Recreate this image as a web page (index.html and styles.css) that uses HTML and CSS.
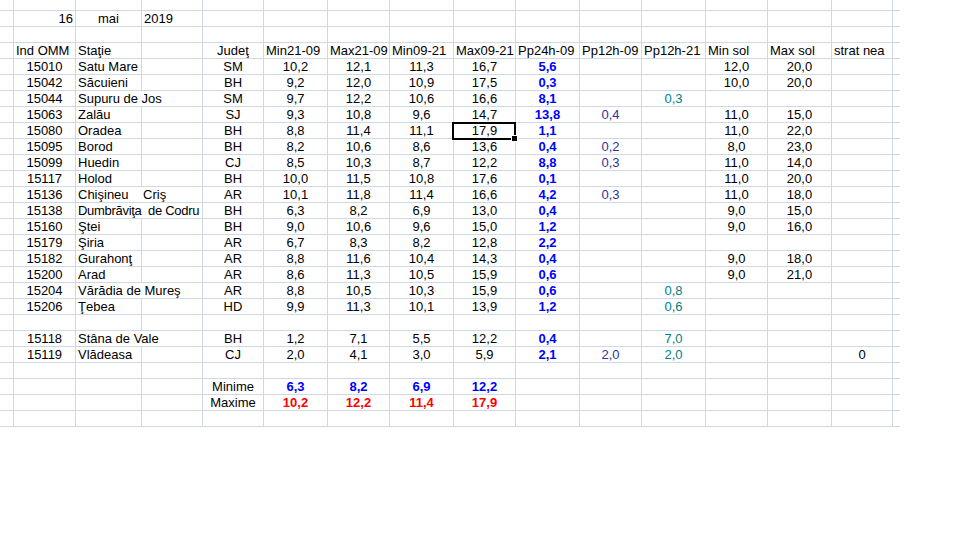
FILE: index.html
```html
<!DOCTYPE html>
<html lang="ro">
<head>
<meta charset="utf-8">
<title>Temperaturi 16 mai 2019</title>
<link rel="stylesheet" href="styles.css">
</head>
<body>
<div class="sheet">
<!-- row 0 -->
<div></div><div></div><div></div><div></div><div></div><div></div><div></div><div></div><div></div><div></div><div></div><div></div><div></div><div></div><div></div><div class="e"></div>
<!-- row 1 -->
<div></div><div class="r">16</div><div>mai</div><div class="t">2019</div><div></div><div></div><div></div><div></div><div></div><div></div><div></div><div></div><div></div><div></div><div></div><div class="e"></div>
<!-- row 2 -->
<div></div><div></div><div></div><div></div><div></div><div></div><div></div><div></div><div></div><div></div><div></div><div></div><div></div><div></div><div></div><div class="e"></div>
<!-- row 3 headers -->
<div></div><div class="t">Ind OMM</div><div class="t">Staţie</div><div></div><div>Judeţ</div><div class="t">Min21-09</div><div class="t">Max21-09</div><div class="t">Min09-21</div><div class="t">Max09-21</div><div class="t">Pp24h-09</div><div class="t">Pp12h-09</div><div class="t">Pp12h-21</div><div class="t">Min sol</div><div class="t">Max sol</div><div class="t">strat nea</div><div class="e"></div>
<!-- data -->
<div></div><div>15010</div><div class="t">Satu Mare</div><div></div><div>SM</div><div>10,2</div><div>12,1</div><div>11,3</div><div>16,7</div><div class="bb">5,6</div><div></div><div></div><div>12,0</div><div>20,0</div><div></div><div class="e"></div>
<div></div><div>15042</div><div class="t">Săcuieni</div><div></div><div>BH</div><div>9,2</div><div>12,0</div><div>10,9</div><div>17,5</div><div class="bb">0,3</div><div></div><div></div><div>10,0</div><div>20,0</div><div></div><div class="e"></div>
<div></div><div>15044</div><div class="t s2">Supuru de Jos</div><div>SM</div><div>9,7</div><div>12,2</div><div>10,6</div><div>16,6</div><div class="bb">8,1</div><div></div><div class="te">0,3</div><div></div><div></div><div></div><div class="e"></div>
<div></div><div>15063</div><div class="t">Zalău</div><div></div><div>SJ</div><div>9,3</div><div>10,8</div><div>9,6</div><div>14,7</div><div class="bb">13,8</div><div class="pu">0,4</div><div></div><div>11,0</div><div>15,0</div><div></div><div class="e"></div>
<div></div><div>15080</div><div class="t">Oradea</div><div></div><div>BH</div><div>8,8</div><div>11,4</div><div>11,1</div><div>17,9</div><div class="bb">1,1</div><div></div><div></div><div>11,0</div><div>22,0</div><div></div><div class="e"></div>
<div></div><div>15095</div><div class="t">Borod</div><div></div><div>BH</div><div>8,2</div><div>10,6</div><div>8,6</div><div>13,6</div><div class="bb">0,4</div><div class="pu">0,2</div><div></div><div>8,0</div><div>23,0</div><div></div><div class="e"></div>
<div></div><div>15099</div><div class="t">Huedin</div><div></div><div>CJ</div><div>8,5</div><div>10,3</div><div>8,7</div><div>12,2</div><div class="bb">8,8</div><div class="pu">0,3</div><div></div><div>11,0</div><div>14,0</div><div></div><div class="e"></div>
<div></div><div>15117</div><div class="t">Holod</div><div></div><div>BH</div><div>10,0</div><div>11,5</div><div>10,8</div><div>17,6</div><div class="bb">0,1</div><div></div><div></div><div>11,0</div><div>20,0</div><div></div><div class="e"></div>
<div></div><div>15136</div><div class="t s2">Chişineu    Criş</div><div>AR</div><div>10,1</div><div>11,8</div><div>11,4</div><div>16,6</div><div class="bb">4,2</div><div class="pu">0,3</div><div></div><div>11,0</div><div>18,0</div><div></div><div class="e"></div>
<div></div><div>15138</div><div class="t s2 tight">Dumbrăviţa  de Codru</div><div>BH</div><div>6,3</div><div>8,2</div><div>6,9</div><div>13,0</div><div class="bb">0,4</div><div></div><div></div><div>9,0</div><div>15,0</div><div></div><div class="e"></div>
<div></div><div>15160</div><div class="t">Ştei</div><div></div><div>BH</div><div>9,0</div><div>10,6</div><div>9,6</div><div>15,0</div><div class="bb">1,2</div><div></div><div></div><div>9,0</div><div>16,0</div><div></div><div class="e"></div>
<div></div><div>15179</div><div class="t">Şiria</div><div></div><div>AR</div><div>6,7</div><div>8,3</div><div>8,2</div><div>12,8</div><div class="bb">2,2</div><div></div><div></div><div></div><div></div><div></div><div class="e"></div>
<div></div><div>15182</div><div class="t">Gurahonţ</div><div></div><div>AR</div><div>8,8</div><div>11,6</div><div>10,4</div><div>14,3</div><div class="bb">0,4</div><div></div><div></div><div>9,0</div><div>18,0</div><div></div><div class="e"></div>
<div></div><div>15200</div><div class="t">Arad</div><div></div><div>AR</div><div>8,6</div><div>11,3</div><div>10,5</div><div>15,9</div><div class="bb">0,6</div><div></div><div></div><div>9,0</div><div>21,0</div><div></div><div class="e"></div>
<div></div><div>15204</div><div class="t s2">Vărădia de Mureş</div><div>AR</div><div>8,8</div><div>10,5</div><div>10,3</div><div>15,9</div><div class="bb">0,6</div><div></div><div class="te">0,8</div><div></div><div></div><div></div><div class="e"></div>
<div></div><div>15206</div><div class="t">Ţebea</div><div></div><div>HD</div><div>9,9</div><div>11,3</div><div>10,1</div><div>13,9</div><div class="bb">1,2</div><div></div><div class="te">0,6</div><div></div><div></div><div></div><div class="e"></div>
<!-- row 20 empty -->
<div></div><div></div><div></div><div></div><div></div><div></div><div></div><div></div><div></div><div></div><div></div><div></div><div></div><div></div><div></div><div class="e"></div>
<div></div><div>15118</div><div class="t s2">Stâna de Vale</div><div>BH</div><div>1,2</div><div>7,1</div><div>5,5</div><div>12,2</div><div class="bb">0,4</div><div></div><div class="te">7,0</div><div></div><div></div><div></div><div class="e"></div>
<div></div><div>15119</div><div class="t">Vlădeasa</div><div></div><div>CJ</div><div>2,0</div><div>4,1</div><div>3,0</div><div>5,9</div><div class="bb">2,1</div><div class="pu">2,0</div><div class="te">2,0</div><div></div><div></div><div>0</div><div class="e"></div>
<!-- row 23 empty -->
<div></div><div></div><div></div><div></div><div></div><div></div><div></div><div></div><div></div><div></div><div></div><div></div><div></div><div></div><div></div><div class="e"></div>
<!-- row 24 minime -->
<div></div><div></div><div></div><div></div><div>Minime</div><div class="bb">6,3</div><div class="bb">8,2</div><div class="bb">6,9</div><div class="bb">12,2</div><div></div><div></div><div></div><div></div><div></div><div></div><div class="e"></div>
<!-- row 25 maxime -->
<div></div><div></div><div></div><div></div><div>Maxime</div><div class="br">10,2</div><div class="br">12,2</div><div class="br">11,4</div><div class="br">17,9</div><div></div><div></div><div></div><div></div><div></div><div></div><div class="e"></div>
<!-- row 26 empty -->
<div></div><div></div><div></div><div></div><div></div><div></div><div></div><div></div><div></div><div></div><div></div><div></div><div></div><div></div><div></div><div class="e"></div>
<div class="sel"><span class="handle"></span></div>
</div>
</body>
</html>
```

FILE: styles.css
```css
html, body {
  margin: 0;
  background: #ffffff;
}

.sheet {
  position: relative;
  display: grid;
  grid-template-columns: 14px 62px 66px 61px 61px 64px 62px 64px 62px 64px 62px 64px 62px 64px 61px 7px;
  grid-template-rows: 11px repeat(26, 16px);
  width: max-content;
  font-family: "Liberation Sans", Arial, sans-serif;
  font-size: 13px;
  line-height: 15px;
  color: #000000;
}

.sheet > div {
  box-sizing: border-box;
  border-right: 1px solid #d0d7e5;
  border-bottom: 1px solid #d0d7e5;
  white-space: pre;
  text-align: center;
  overflow: visible;
}

.sheet > .e {
  border-right: 0;
}

.sheet > .t {
  text-align: left;
  padding-left: 2px;
}

.sheet > .r {
  text-align: right;
  padding-right: 2px;
}

.sheet > .s2 {
  grid-column: span 2;
}

.sheet > .tight {
  letter-spacing: -0.3px;
}

.bb {
  color: #0000ff;
  font-weight: bold;
}

.br {
  color: #ff0000;
  font-weight: bold;
}

.pu {
  color: #333399;
}

.te {
  color: #008080;
}

.sheet > .sel {
  position: absolute;
  left: 452px;
  top: 122px;
  width: 64px;
  height: 18px;
  box-sizing: border-box;
  border: 2px solid #000000;
}

.handle {
  position: absolute;
  right: -4px;
  bottom: -4px;
  width: 5px;
  height: 5px;
  background: #000000;
  border: 1px solid #ffffff;
}
```
